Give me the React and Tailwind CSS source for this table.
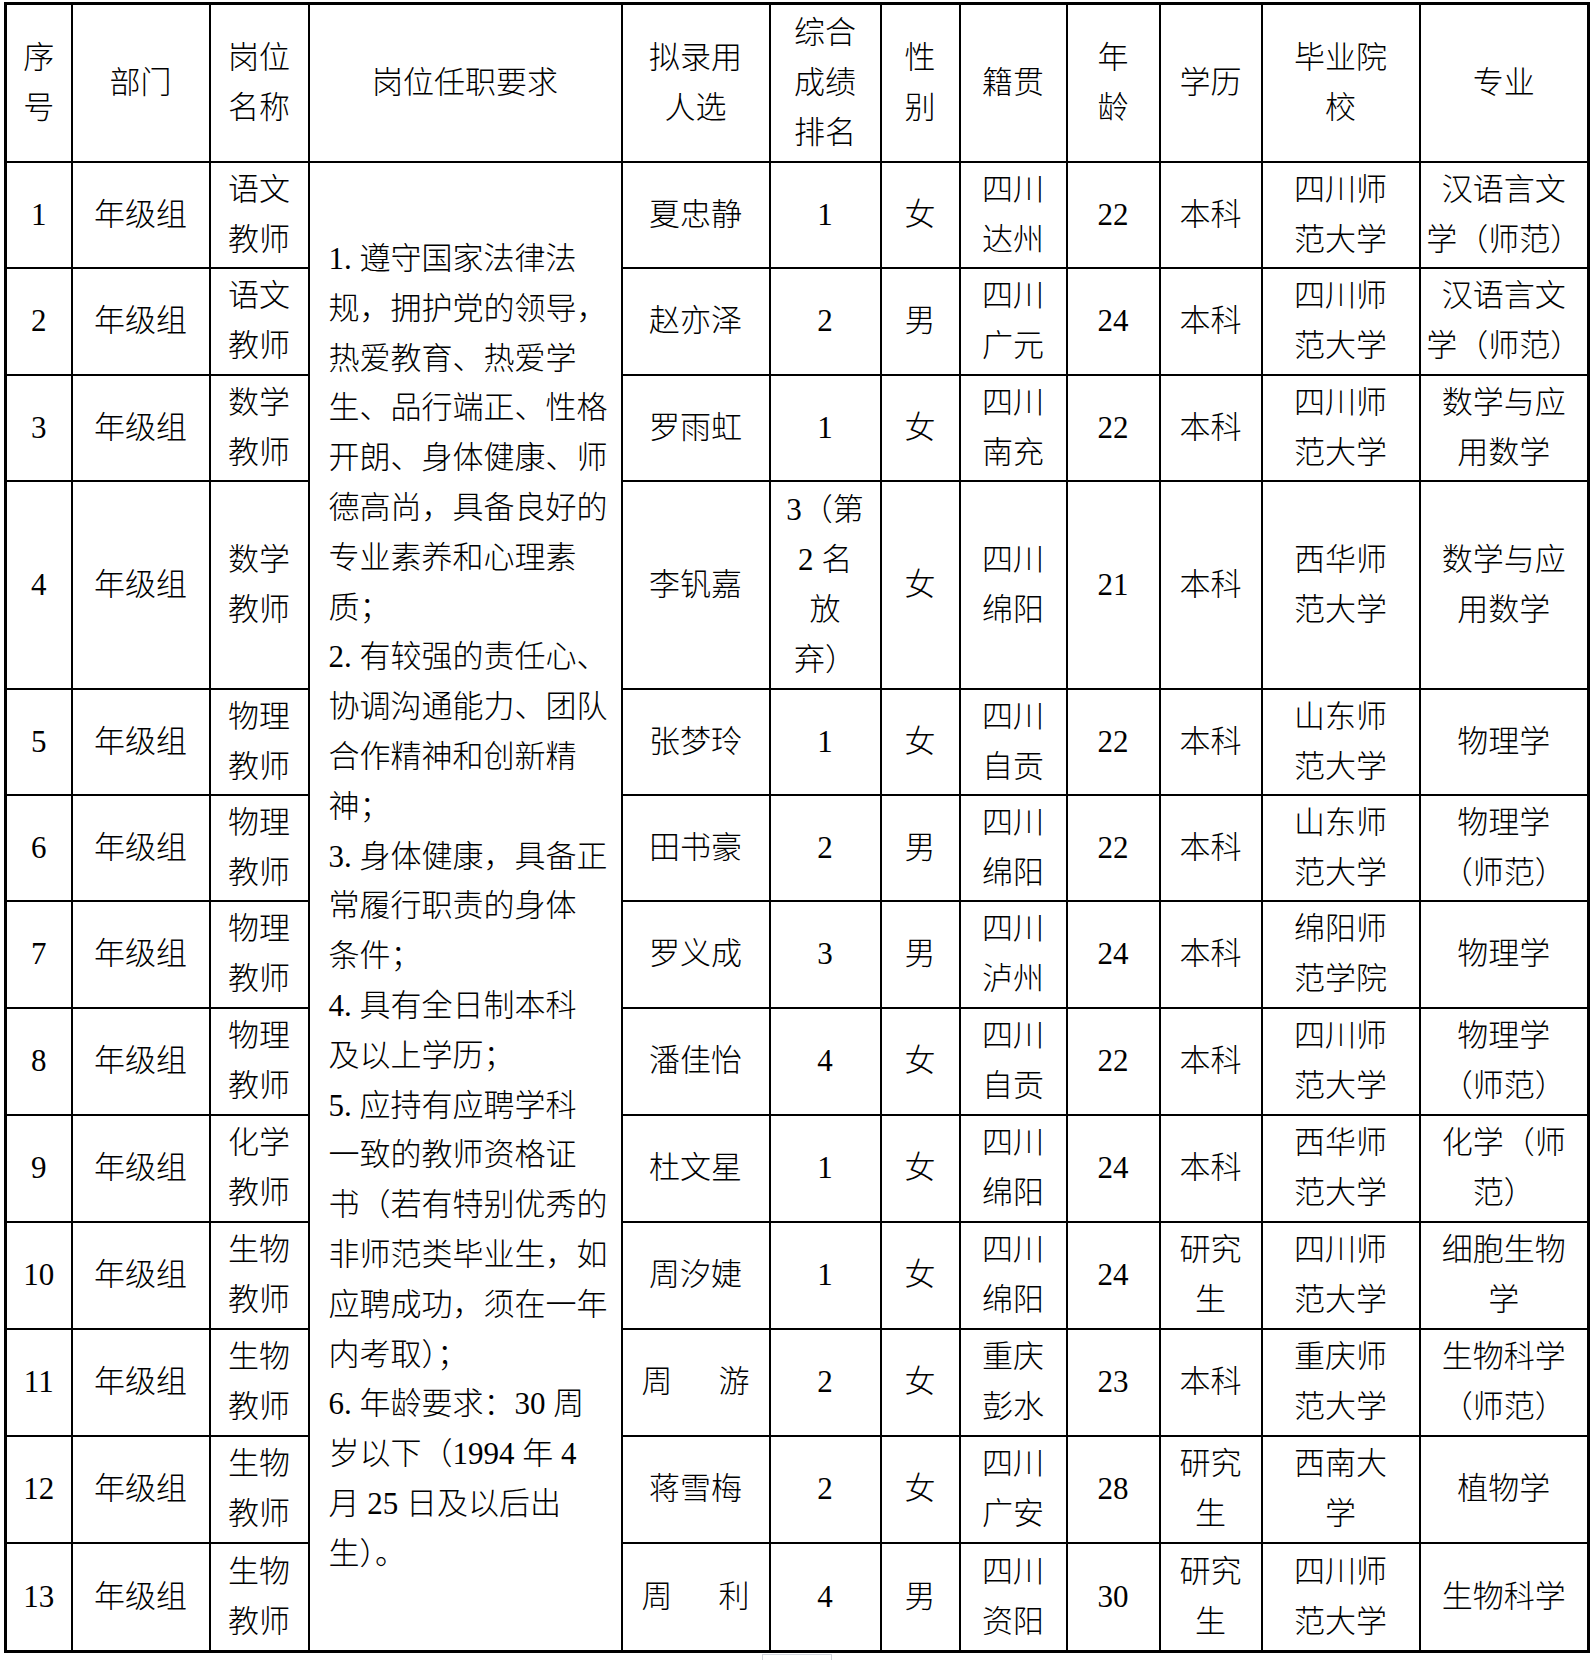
const rows = [
  { no: '1', post: ['语文', '教师'], name: '夏忠静', rank: ['1'], sex: '女', origin: ['四川', '达州'], age: '22', edu: ['本科'], school: ['四川师', '范大学'], major: ['汉语言文', '学（师范）'], h: 'h-[106px]' },
  { no: '2', post: ['语文', '教师'], name: '赵亦泽', rank: ['2'], sex: '男', origin: ['四川', '广元'], age: '24', edu: ['本科'], school: ['四川师', '范大学'], major: ['汉语言文', '学（师范）'], h: 'h-[107px]' },
  { no: '3', post: ['数学', '教师'], name: '罗雨虹', rank: ['1'], sex: '女', origin: ['四川', '南充'], age: '22', edu: ['本科'], school: ['四川师', '范大学'], major: ['数学与应', '用数学'], h: 'h-[106px]' },
  { no: '4', post: ['数学', '教师'], name: '李钒嘉', rank: ['3（第', '2 名', '放', '弃）'], sex: '女', origin: ['四川', '绵阳'], age: '21', edu: ['本科'], school: ['西华师', '范大学'], major: ['数学与应', '用数学'], h: 'h-[208px]' },
  { no: '5', post: ['物理', '教师'], name: '张梦玲', rank: ['1'], sex: '女', origin: ['四川', '自贡'], age: '22', edu: ['本科'], school: ['山东师', '范大学'], major: ['物理学'], h: 'h-[106px]' },
  { no: '6', post: ['物理', '教师'], name: '田书豪', rank: ['2'], sex: '男', origin: ['四川', '绵阳'], age: '22', edu: ['本科'], school: ['山东师', '范大学'], major: ['物理学', '（师范）'], h: 'h-[106px]' },
  { no: '7', post: ['物理', '教师'], name: '罗义成', rank: ['3'], sex: '男', origin: ['四川', '泸州'], age: '24', edu: ['本科'], school: ['绵阳师', '范学院'], major: ['物理学'], h: 'h-[107px]' },
  { no: '8', post: ['物理', '教师'], name: '潘佳怡', rank: ['4'], sex: '女', origin: ['四川', '自贡'], age: '22', edu: ['本科'], school: ['四川师', '范大学'], major: ['物理学', '（师范）'], h: 'h-[107px]' },
  { no: '9', post: ['化学', '教师'], name: '杜文星', rank: ['1'], sex: '女', origin: ['四川', '绵阳'], age: '24', edu: ['本科'], school: ['西华师', '范大学'], major: ['化学（师', '范）'], h: 'h-[107px]' },
  { no: '10', post: ['生物', '教师'], name: '周汐婕', rank: ['1'], sex: '女', origin: ['四川', '绵阳'], age: '24', edu: ['研究', '生'], school: ['四川师', '范大学'], major: ['细胞生物', '学'], h: 'h-[107px]' },
  { no: '11', post: ['生物', '教师'], name: ['周', '游'], rank: ['2'], sex: '女', origin: ['重庆', '彭水'], age: '23', edu: ['本科'], school: ['重庆师', '范大学'], major: ['生物科学', '（师范）'], h: 'h-[107px]' },
  { no: '12', post: ['生物', '教师'], name: '蒋雪梅', rank: ['2'], sex: '女', origin: ['四川', '广安'], age: '28', edu: ['研究', '生'], school: ['西南大', '学'], major: ['植物学'], h: 'h-[107px]' },
  { no: '13', post: ['生物', '教师'], name: ['周', '利'], rank: ['4'], sex: '男', origin: ['四川', '资阳'], age: '30', edu: ['研究', '生'], school: ['四川师', '范大学'], major: ['生物科学'], h: 'h-[109px]' },
];

// 岗位任职要求，按原表的折行逐行写出
const requirements = [
  '1. 遵守国家法律法',
  '规，拥护党的领导，',
  '热爱教育、热爱学',
  '生、品行端正、性格',
  '开朗、身体健康、师',
  '德高尚，具备良好的',
  '专业素养和心理素',
  '质；',
  '2. 有较强的责任心、',
  '协调沟通能力、团队',
  '合作精神和创新精',
  '神；',
  '3. 身体健康，具备正',
  '常履行职责的身体',
  '条件；',
  '4. 具有全日制本科',
  '及以上学历；',
  '5. 应持有应聘学科',
  '一致的教师资格证',
  '书（若有特别优秀的',
  '非师范类毕业生，如',
  '应聘成功，须在一年',
  '内考取）；',
  '6. 年龄要求：30 周',
  '岁以下（1994 年 4',
  '月 25 日及以后出',
  '生）。',
];

const headers = [
  ['序', '号'],
  ['部门'],
  ['岗位', '名称'],
  ['岗位任职要求'],
  ['拟录用', '人选'],
  ['综合', '成绩', '排名'],
  ['性', '别'],
  ['籍贯'],
  ['年', '龄'],
  ['学历'],
  ['毕业院', '校'],
  ['专业'],
];

const colWidths = ['w-[66px]', 'w-[138px]', 'w-[99px]', 'w-[313px]', 'w-[148px]', 'w-[111px]', 'w-[79px]', 'w-[107px]', 'w-[93px]', 'w-[102px]', 'w-[158px]', 'w-[169px]'];

const cell = 'border-2 border-black p-0 text-center align-middle';

const Lines = ({ lines }) => (
  <>
    {[].concat(lines).map((l, i) => (
      <div key={i} className="whitespace-nowrap">{l}</div>
    ))}
  </>
);

export default function App() {
  return (
    <div className="min-h-[1661px] bg-white text-black font-light" style={{ fontFamily: '"Liberation Serif", "Noto Sans CJK SC", serif' }}>
      <div className="pl-[4px] pt-[2px]">
        <table className="table-fixed border-collapse border-[3px] border-black w-[1583px] text-[31px] leading-[50px]">
          <colgroup>
            {colWidths.map((w, i) => (
              <col key={i} className={w} />
            ))}
          </colgroup>
          <thead>
            <tr className="h-[158px]">
              {headers.map((h, i) => (
                <th key={i} className={`${cell} font-light`}>
                  <Lines lines={h} />
                </th>
              ))}
            </tr>
          </thead>
          <tbody>
            {rows.map((r, idx) => (
              <tr key={r.no} className={r.h}>
                <td className={cell}>{r.no}</td>
                <td className={cell}>年级组</td>
                <td className={cell}><Lines lines={r.post} /></td>
                {idx === 0 && (
                  <td rowSpan={13} className={`${cell} text-left pl-[19px]`}>
                    {requirements.map((l, i) => (
                      <div key={i} className="whitespace-pre leading-[49.8px]">{l}</div>
                    ))}
                  </td>
                )}
                <td className={cell}>
                  {Array.isArray(r.name) ? (
                    <div className="flex justify-between px-[19px]">
                      <span>{r.name[0]}</span>
                      <span>{r.name[1]}</span>
                    </div>
                  ) : (
                    r.name
                  )}
                </td>
                <td className={cell}><Lines lines={r.rank} /></td>
                <td className={cell}>{r.sex}</td>
                <td className={cell}><Lines lines={r.origin} /></td>
                <td className={cell}>{r.age}</td>
                <td className={cell}><Lines lines={r.edu} /></td>
                <td className={cell}><Lines lines={r.school} /></td>
                <td className={cell}><Lines lines={r.major} /></td>
              </tr>
            ))}
          </tbody>
        </table>
        <div className="ml-[758px] mt-[1px] w-[70px] h-[6px] border border-b-0 border-gray-300" />
      </div>
    </div>
  );
}
